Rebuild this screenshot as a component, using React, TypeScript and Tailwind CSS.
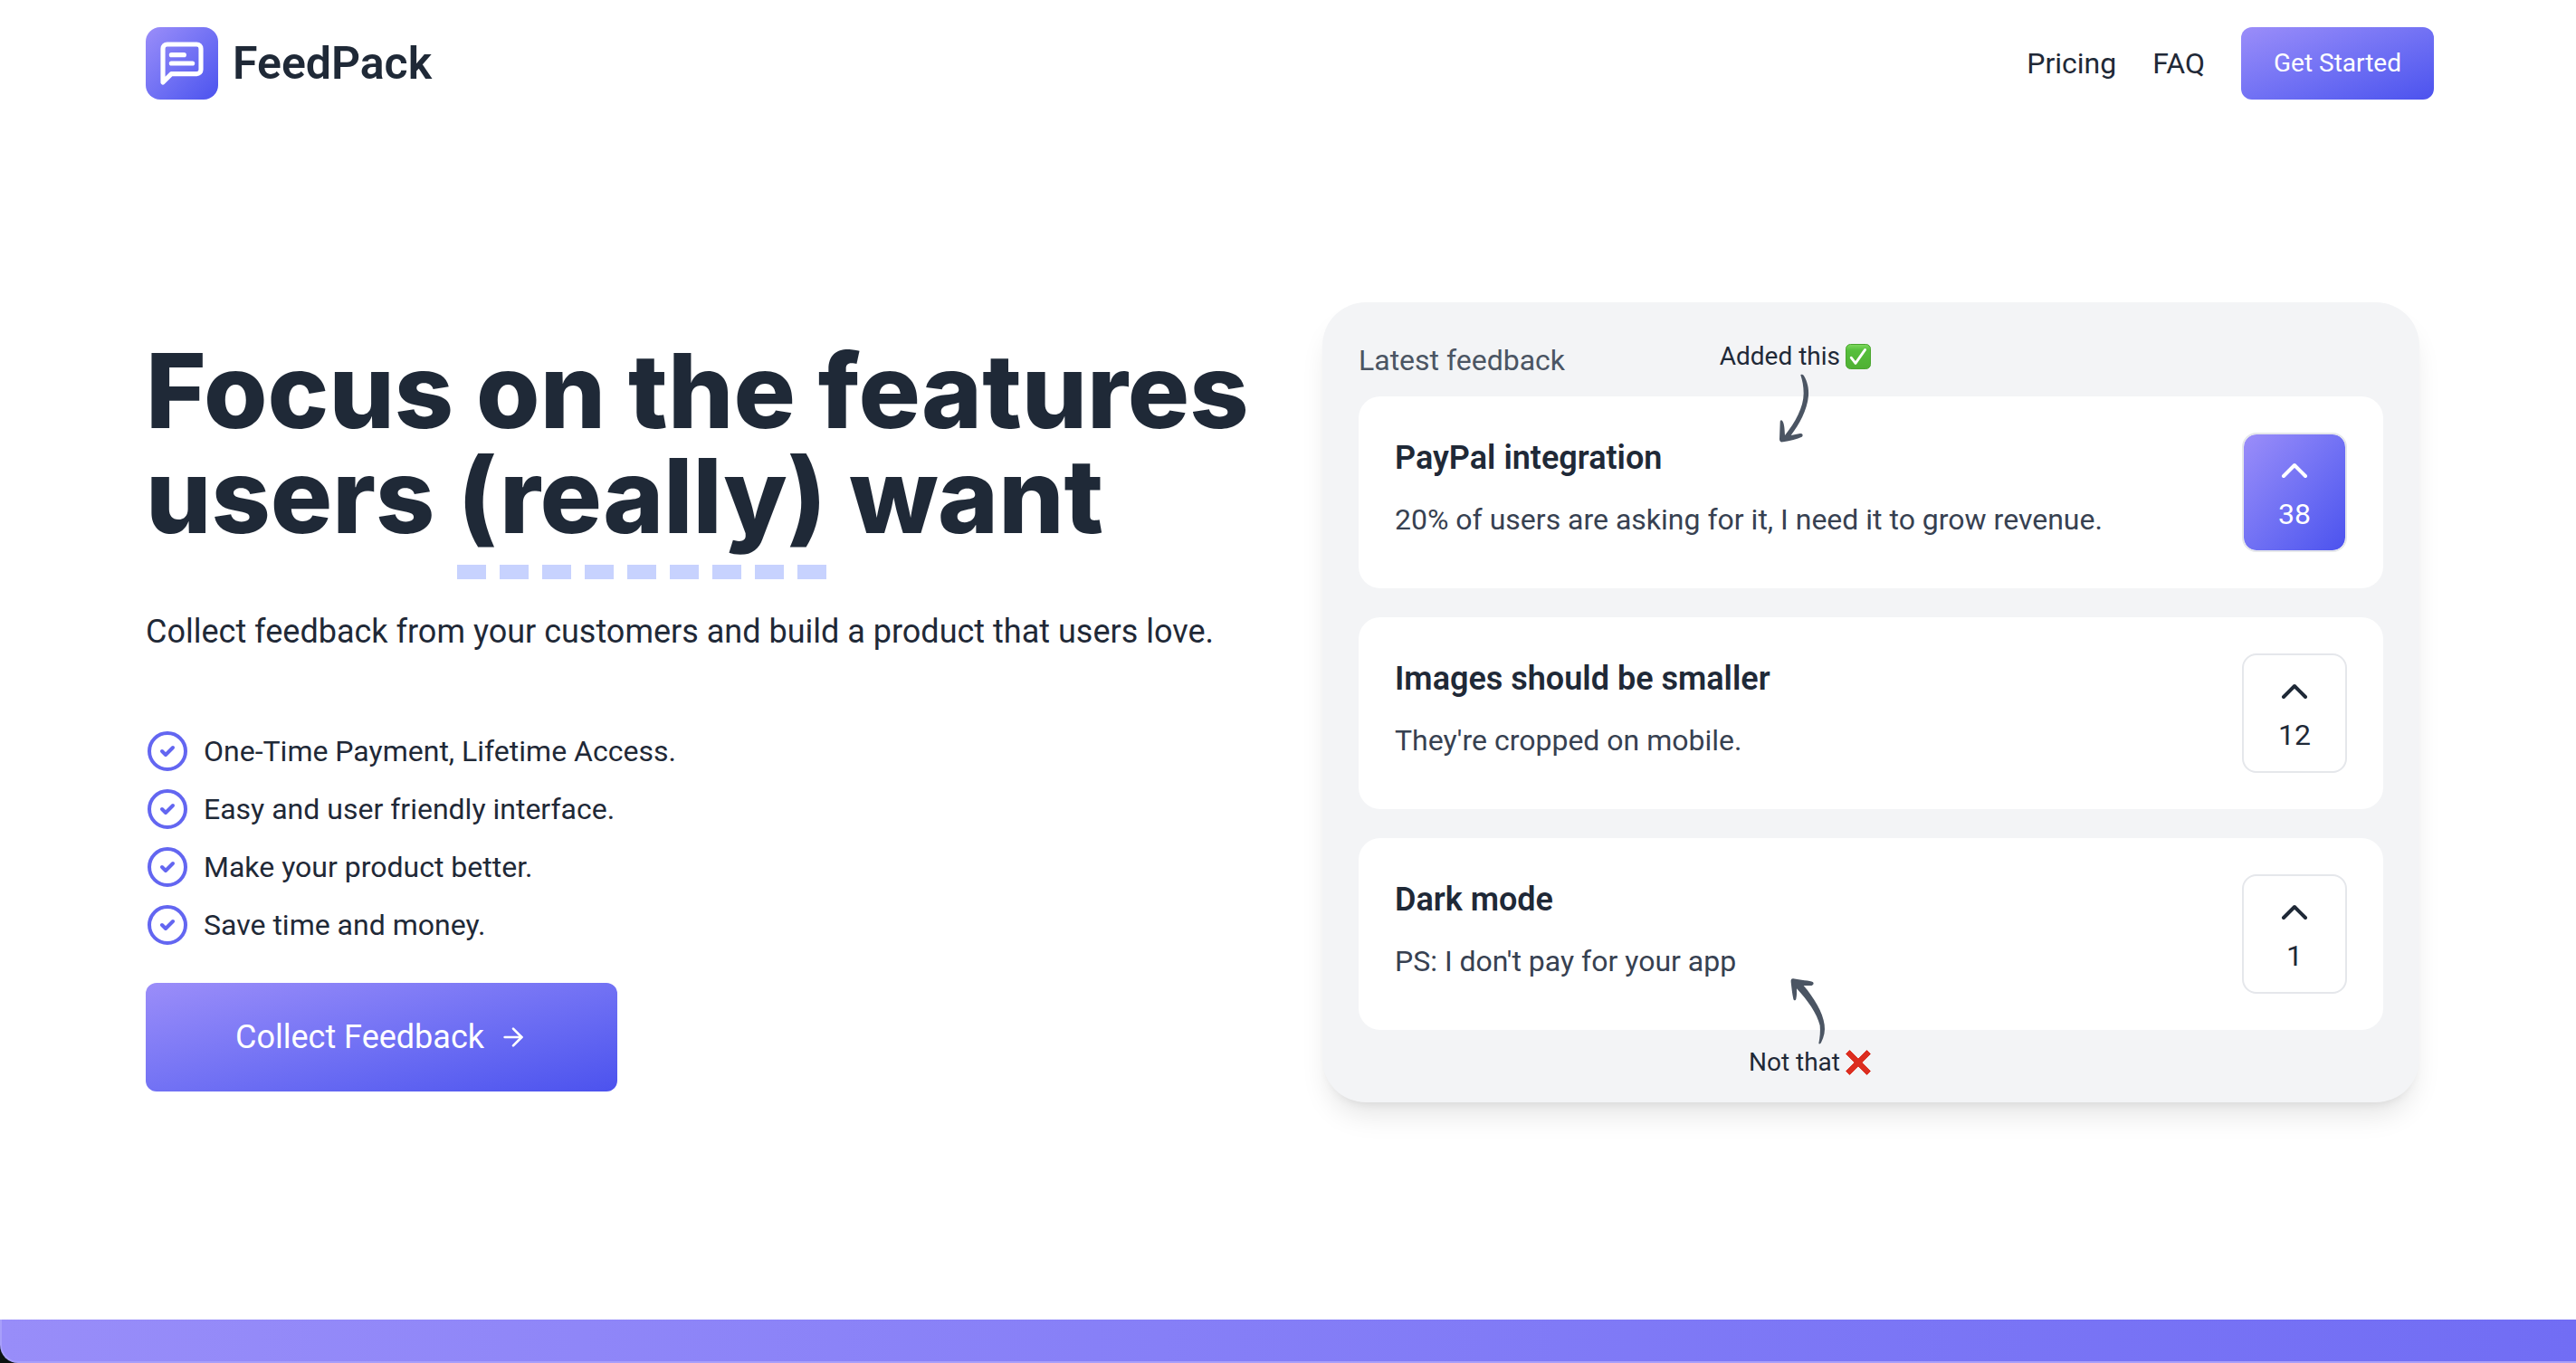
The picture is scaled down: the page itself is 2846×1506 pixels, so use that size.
import { ArrowRight, ChevronUp, CircleCheck } from "lucide-react";

const perks = [
  "One-Time Payment, Lifetime Access.",
  "Easy and user friendly interface.",
  "Make your product better.",
  "Save time and money.",
];

const posts = [
  { title: "PayPal integration", body: "20% of users are asking for it, I need it to grow revenue.", votes: 38, voted: true },
  { title: "Images should be smaller", body: "They're cropped on mobile.", votes: 12, voted: false },
  { title: "Dark mode", body: "PS: I don't pay for your app", votes: 1, voted: false },
];

function LogoMark() {
  return (
    <span className="flex size-20 items-center justify-center rounded-2xl bg-linear-to-br from-[#9b8df9] to-[#4c52ee] text-white">
      <svg
        className="size-14"
        viewBox="0 0 24 24"
        fill="none"
        stroke="currentColor"
        strokeWidth="2.2"
        strokeLinecap="round"
        strokeLinejoin="round"
        aria-hidden="true"
      >
        <path d="M21 15a2 2 0 0 1-2 2H7l-4 4V5a2 2 0 0 1 2-2h14a2 2 0 0 1 2 2z" />
        <path d="M13 8H7" />
        <path d="M17 12H7" />
      </svg>
    </span>
  );
}

function CheckBadge() {
  return (
    <svg className="size-7" viewBox="0 0 28 28" role="img" aria-label="Yes">
      <defs>
        <linearGradient id="badge" x1="0" y1="0" x2="0" y2="1">
          <stop offset="0" stopColor="#7ed95f" />
          <stop offset="0.25" stopColor="#55bf3b" />
          <stop offset="1" stopColor="#4fb034" />
        </linearGradient>
      </defs>
      <rect x="0.5" y="0.5" width="27" height="27" rx="5" fill="url(#badge)" stroke="#4aa52f" />
      <path d="M6.2 15.2 11 21.4 21.6 6.4" fill="none" stroke="#fff" strokeWidth="2.8" strokeLinecap="round" strokeLinejoin="round" />
    </svg>
  );
}

function CrossBadge() {
  return (
    <svg className="size-7" viewBox="0 0 28 28" role="img" aria-label="No">
      <path
        d="M4.5 0.6 14 10.1 23.5 0.6 27.4 4.5 17.9 14 27.4 23.5 23.5 27.4 14 17.9 4.5 27.4 0.6 23.5 10.1 14 0.6 4.5z"
        fill="#dc2e20"
        stroke="#dc2e20"
        strokeWidth="1"
        strokeLinejoin="round"
      />
    </svg>
  );
}

function VoteButton({ votes, voted }: { votes: number; voted: boolean }) {
  return (
    <button
      type="button"
      aria-label={`Upvote, ${votes} votes`}
      className={
        voted
          ? "w-[116px] shrink-0 rounded-2xl border-2 border-gray-200 bg-linear-to-br from-[#9b8df9] to-[#4c52ee] bg-clip-padding py-4 text-white"
          : "w-[116px] shrink-0 rounded-2xl border-2 border-gray-200 bg-white py-4 text-[#1f2937]"
      }
    >
      <ChevronUp className="mx-auto size-12" />
      <span className="block text-[32px] leading-12">{votes}</span>
    </button>
  );
}

function FeedbackPanel() {
  return (
    <section className="relative mr-4 rounded-[48px] bg-gray-100 p-10 pb-20 shadow-[0_20px_30px_-6px_rgb(0_0_0/0.1),0_8px_12px_-8px_rgb(0_0_0/0.1)]">
      <h2 className="text-[32px] leading-12 text-[#4b5563]">Latest feedback</h2>
      <ul className="mt-4 flex flex-col gap-8">
        {posts.map((post) => (
          <li key={post.title} className="flex items-start justify-between gap-8 rounded-3xl bg-white p-10">
            <div>
              <h3 className="text-[36px] leading-14 font-semibold">{post.title}</h3>
              <p className="mt-4 text-[32px] leading-12 text-[#374151]">{post.body}</p>
            </div>
            <VoteButton votes={post.votes} voted={post.voted} />
          </li>
        ))}
      </ul>

      <div className="absolute top-[42px] right-1/2 flex flex-col items-end">
        <p className="flex items-center gap-1.5 text-[28px] leading-9">
          Added this <CheckBadge />
        </p>
        <svg className="mr-[67px] h-[78px] w-9 text-[#4b5563]" viewBox="42 36 108 234" fill="currentColor" aria-hidden="true">
          <path d="M118 43C122 40 126 42 129 46C140 64 146 88 144 112C140 160 114 206 86 243L116 237C124 235 128 243 122 248C106 256 84 260 60 265C52 267 48 262 48 256L50 200C50 192 55 191 58 196C64 206 65 220 66 243C100 200 128 150 128 104C128 80 124 62 118 43Z" />
        </svg>
      </div>

      <div className="absolute right-1/2 bottom-[26px] flex flex-col items-end">
        <svg className="mr-[49px] h-[76px] w-10 text-[#4b5563]" viewBox="54 27 120 228" fill="currentColor" aria-hidden="true">
          <path d="M148 246C150 249 154 247 156 243C166 224 170 204 167 184C162 142 132 94 98 54L122 54C130 54 134 46 128 42C122 38 84 36 64 31C58 30 55 34 56 42C58 60 60 80 64 98C66 105 71 104 73 98C76 86 75 74 75 64C112 104 142 146 152 186C154 206 152 226 148 246Z" />
        </svg>
        <p className="flex items-center gap-1.5 text-[28px] leading-9">
          Not that <CrossBadge />
        </p>
      </div>
    </section>
  );
}

export default function App() {
  return (
    <div className="flex min-h-screen flex-col bg-white font-[Roboto,sans-serif] text-[#1f2937]">
      <div className="mx-auto w-full max-w-[2846px] pr-[157px] pl-[161px]">
        <header className="flex items-center justify-between py-[30px]">
          <a href="#" className="flex items-center gap-4 text-[50px] leading-none font-semibold">
            <LogoMark />
            FeedPack
          </a>
          <nav className="flex items-center gap-10 text-[32px]">
            <a href="#pricing">Pricing</a>
            <a href="#faq">FAQ</a>
            <button
              type="button"
              className="h-20 rounded-xl bg-linear-to-br from-[#9b8df9] to-[#4c52ee] px-9 text-[28px] text-white"
            >
              Get Started
            </button>
          </nav>
        </header>

        <main className="grid grid-cols-2 items-start gap-[72px] pt-[194px] pb-60">
          <div className="flex flex-col items-start pt-10">
            <h1 className="font-[Inter,sans-serif] text-[114px] leading-[116px] font-extrabold">
              Focus on the features
              <br />
              users{" "}
              <span className="underline decoration-[#c7d2fe] decoration-dashed decoration-[16px] underline-offset-[35px] [text-decoration-skip-ink:none]">
                (really)
              </span>{" "}
              want
            </h1>
            <p className="mt-16 text-[36px] leading-14">
              Collect feedback from your customers and build a product that users love.
            </p>
            <ul className="mt-20 flex flex-col gap-4 text-[32px] leading-12">
              {perks.map((perk) => (
                <li key={perk} className="flex items-center gap-4">
                  <CircleCheck className="size-12 text-[#6366f1]" />
                  {perk}
                </li>
              ))}
            </ul>
            <button
              type="button"
              className="mt-10 flex h-[120px] items-center gap-4 rounded-xl bg-linear-to-br from-[#9b8df9] to-[#4c52ee] px-[99px] text-[36px] text-white"
            >
              Collect Feedback
              <ArrowRight className="size-8" />
            </button>
          </div>
          <FeedbackPanel />
        </main>
      </div>

      <footer className="flex flex-1 bg-[#0b1311]">
        <div className="min-h-12 flex-1 rounded-bl-[20px] border-b-2 border-l-2 border-[#a89ffa] bg-linear-to-r from-[#988df9] to-[#716df4]" />
      </footer>
    </div>
  );
}
